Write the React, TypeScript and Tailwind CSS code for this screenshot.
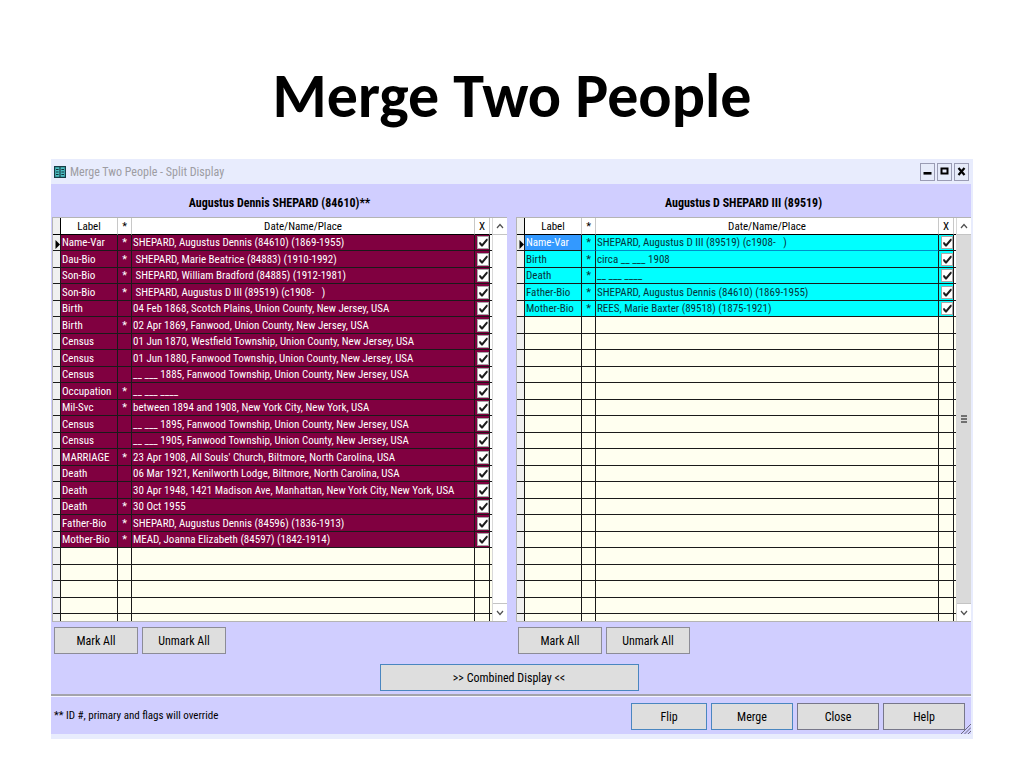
import clsx from "clsx";

type Row = {
    label: string;
    star: boolean;
    text: string;
};

const leftRows: Row[] = [
    {label: "Name-Var", star: true, text: "SHEPARD, Augustus Dennis (84610) (1869-1955)"},
    {label: "Dau-Bio", star: true, text: " SHEPARD, Marie Beatrice (84883) (1910-1992)"},
    {label: "Son-Bio", star: true, text: " SHEPARD, William Bradford (84885) (1912-1981)"},
    {label: "Son-Bio", star: true, text: " SHEPARD, Augustus D III (89519) (c1908-   )"},
    {label: "Birth", star: false, text: "04 Feb 1868, Scotch Plains, Union County, New Jersey, USA"},
    {label: "Birth", star: true, text: "02 Apr 1869, Fanwood, Union County, New Jersey, USA"},
    {label: "Census", star: false, text: "01 Jun 1870, Westfield Township, Union County, New Jersey, USA"},
    {label: "Census", star: false, text: "01 Jun 1880, Fanwood Township, Union County, New Jersey, USA"},
    {label: "Census", star: false, text: "__ ___ 1885, Fanwood Township, Union County, New Jersey, USA"},
    {label: "Occupation", star: true, text: "__ ___ ____"},
    {label: "Mil-Svc", star: true, text: "between 1894 and 1908, New York City, New York, USA"},
    {label: "Census", star: false, text: "__ ___ 1895, Fanwood Township, Union County, New Jersey, USA"},
    {label: "Census", star: false, text: "__ ___ 1905, Fanwood Township, Union County, New Jersey, USA"},
    {label: "MARRIAGE", star: true, text: "23 Apr 1908, All Souls' Church, Biltmore, North Carolina, USA"},
    {label: "Death", star: false, text: "06 Mar 1921, Kenilworth Lodge, Biltmore, North Carolina, USA"},
    {label: "Death", star: false, text: "30 Apr 1948, 1421 Madison Ave, Manhattan, New York City, New York, USA"},
    {label: "Death", star: true, text: "30 Oct 1955"},
    {label: "Father-Bio", star: true, text: "SHEPARD, Augustus Dennis (84596) (1836-1913)"},
    {label: "Mother-Bio", star: true, text: "MEAD, Joanna Elizabeth (84597) (1842-1914)"},
];

const rightRows: Row[] = [
    {label: "Name-Var", star: true, text: "SHEPARD, Augustus D III (89519) (c1908-   )"},
    {label: "Birth", star: true, text: "circa __ ___ 1908"},
    {label: "Death", star: true, text: "__ ___ ____"},
    {label: "Father-Bio", star: true, text: "SHEPARD, Augustus Dennis (84610) (1869-1955)"},
    {label: "Mother-Bio", star: true, text: "REES, Marie Baxter (89518) (1875-1921)"},
];

const VISIBLE_ROWS = 24;

const Check = ({name}: { name: string }) => (
    <label className="relative block h-[13px] w-3">
        <input type="checkbox" defaultChecked aria-label={name}
            className="peer block h-[13px] w-3 appearance-none border border-[#a8a8a8] bg-white"/>
        <svg viewBox="0 0 12 13"
            className="pointer-events-none absolute inset-0 hidden h-[13px] w-3 peer-checked:block">
            <path d="M2.2 6.2 L3.6 6.2 L5 8 L9.4 2.8 L10.6 2.8 L10.6 4.6 L5.6 10.6 L4.4 10.6 L2.2 8 Z" fill="#1c1c1c"/>
        </svg>
    </label>
);

const ScrollBar = ({full}: { full?: boolean }) => (
    <div className="flex w-[15px] shrink-0 flex-col border-l border-[#d8d8d8] bg-white">
        <button type="button" aria-label="Scroll up"
            className="flex h-[17px] shrink-0 items-center justify-center border-b border-[#c4c4c4] bg-white">
            <svg viewBox="0 0 8 6" className="h-[6px] w-2">
                <path d="M1 5 L4 1.5 L7 5" fill="none" stroke="#505050" strokeWidth="1.2"/>
            </svg>
        </button>
        <div className={clsx("flex flex-1 flex-col items-center justify-center gap-px", full ? "bg-[#dadada]" : "bg-white")}>
            {full && (
                <>
                    <div className="h-0.5 w-1.5 bg-[#707070]"/>
                    <div className="h-0.5 w-1.5 bg-[#707070]"/>
                    <div className="h-0.5 w-1.5 bg-[#707070]"/>
                </>
            )}
        </div>
        <button type="button" aria-label="Scroll down"
            className="flex h-[18px] shrink-0 items-center justify-center border-t border-[#c4c4c4] bg-white">
            <svg viewBox="0 0 8 6" className="h-[6px] w-2">
                <path d="M1 1 L4 4.5 L7 1" fill="none" stroke="#505050" strokeWidth="1.2"/>
            </svg>
        </button>
    </div>
);

type PaneProps = {
    title: string;
    rows: Row[];
    variant: "maroon" | "cyan";
};

const Pane = ({title, rows, variant}: PaneProps) => {
    const fill = variant === "maroon" ? "bg-[#800040] text-white" : "bg-[#00ffff] text-[#06333a]";
    const empty = Array.from({length: VISIBLE_ROWS - rows.length});
    const head = "border-b border-b-black border-r border-r-[#c8c8c8] bg-white p-0 text-center font-normal";
    const cell = "border-b border-r border-[#1a1a1a] p-0";

    return (
        <section className="min-w-0">
            <h2 className="pt-3 pb-1.5 text-center text-[12px] leading-[15px] font-bold">{title}</h2>
            <div className="flex h-[405px] overflow-hidden border-t border-b border-l border-[#b4b4b4] bg-[#fffff0]">
                <div className="min-w-0 flex-1">
                    <table className="w-full table-fixed border-separate border-spacing-0 leading-[15px]">
                        <colgroup>
                            <col className="w-2"/>
                            <col className="w-[57px]"/>
                            <col className="w-[14px]"/>
                            <col/>
                            <col className="w-[15px]"/>
                            <col className="w-[2px]"/>
                        </colgroup>
                        <thead>
                            <tr className="h-[17px]">
                                <td className="border-r border-b border-black bg-[#f0f0f0] p-0"/>
                                <th className={head}>Label</th>
                                <th className={head}>*</th>
                                <th className={head}>Date/Name/Place</th>
                                <th className={head}>X</th>
                                <td className="border-b border-black bg-white p-0"/>
                            </tr>
                        </thead>
                        <tbody>
                            {rows.map((row, i) => {
                                const active = variant === "cyan" && i === 0;
                                return (
                                    <tr key={i} className="odd:h-4 even:h-[17px]">
                                        <td className={clsx(cell, "bg-[#f0f0f0]")}>
                                            {i === 0 && (
                                                <svg viewBox="0 0 7 12" className="block h-3 w-[7px]">
                                                    <path d="M2.5 3 L7 7.5 L2.5 12 Z" fill="#000"/>
                                                </svg>
                                            )}
                                        </td>
                                        <td className={clsx(cell, "truncate pl-px", active ? "bg-[#3399ff] text-white" : fill)}>
                                            {row.label}
                                        </td>
                                        <td className={clsx(cell, "text-center", fill, active && "border-b-[#0090c8]")}>
                                            {row.star && "*"}
                                        </td>
                                        <td className={clsx(cell, "overflow-hidden pl-px whitespace-pre", fill, active && "border-b-[#0090c8]")}>
                                            {row.text}
                                        </td>
                                        <td className={clsx(cell, "pl-0.5", fill)}>
                                            <Check name={`Include ${row.label}`}/>
                                        </td>
                                        <td className="border-b border-[#1a1a1a] bg-white p-0"/>
                                    </tr>
                                );
                            })}
                            {empty.map((_, i) => (
                                <tr key={`empty-${i}`} className="odd:h-4 even:h-[17px]">
                                    <td className={clsx(cell, "bg-[#f0f0f0]")}/>
                                    <td className={cell}/>
                                    <td className={cell}/>
                                    <td className={cell}/>
                                    <td className={cell}/>
                                    <td className="border-b border-[#1a1a1a] p-0"/>
                                </tr>
                            ))}
                        </tbody>
                    </table>
                </div>
                <ScrollBar full={variant === "cyan"}/>
            </div>
            <div className="flex gap-1 pt-[5px] pl-0.5">
                <PushButton className="w-[84px] border-[#8c8c96]">Mark All</PushButton>
                <PushButton className="w-[84px] border-[#8c8c96]">Unmark All</PushButton>
            </div>
        </section>
    );
};

const PushButton = ({className, children}: { className: string; children: string }) => (
    <button type="button" className={clsx("h-[27px] border bg-[#dedede] text-center text-[12px]", className)}>
        {children}
    </button>
);

const caption = "flex h-[18px] w-[15px] items-center justify-center border border-[#9a9cb4] bg-[#e6ebfa]";

const TitleBar = () => (
    <header className="flex h-[25px] items-center bg-[#e8ecfd] pr-0.5 pl-[3px]">
        <svg viewBox="0 0 12 12" className="h-3 w-3">
            <rect width="12" height="12" fill="#163c46"/>
            <path d="M1.2 1.2h4.2v9.6h-4.2z M6.6 1.2h4.2v9.6h-4.2z" fill="#4cc0c4"/>
            <path d="M2 3.5h2.6M2 6h2.6M2 8.5h2.6M7.4 3.5h2.6M7.4 6h2.6M7.4 8.5h2.6" stroke="#12323c" strokeWidth="1"/>
        </svg>
        <h3 className="flex-1 pl-1 text-[12px] text-[#9d9da3]">Merge Two People - Split Display</h3>
        <div className="flex gap-0.5">
            <button type="button" aria-label="Minimize" className={caption}>
                <svg viewBox="0 0 9 9" className="h-[9px] w-[9px]"><path d="M0.5 5h8v2.6H0.5z" fill="#000"/></svg>
            </button>
            <button type="button" aria-label="Maximize" className={caption}>
                <svg viewBox="0 0 9 9" className="h-[9px] w-[9px]">
                    <path d="M1.5 1.5h6v5h-6z" fill="none" stroke="#000" strokeWidth="2"/>
                </svg>
            </button>
            <button type="button" aria-label="Close window" className={caption}>
                <svg viewBox="0 0 9 9" className="h-[9px] w-[9px]">
                    <path d="M1.5 1 L7.5 8 M7.5 1 L1.5 8" stroke="#000" strokeWidth="2.2"/>
                </svg>
            </button>
        </div>
    </header>
);

const App = () => {
    return (
        <main className="bg-white pt-[60px] pb-[29px] text-black">
            <h1 className="text-center font-[Carlito,Lato,sans-serif] text-[62px] leading-[72px] font-bold">Merge Two People</h1>
            <div className="mx-[51px] mt-[27px] border-r-2 border-b-5 border-[#e8ecfd] bg-[#d0ceff] font-['Roboto_Condensed','DejaVu_Sans_Condensed',sans-serif] text-[11px]">
                <TitleBar/>
                <div className="grid grid-cols-2 gap-[9px] pl-px">
                    <Pane title="Augustus Dennis SHEPARD (84610)**" rows={leftRows} variant="maroon"/>
                    <Pane title="Augustus D SHEPARD III (89519)" rows={rightRows} variant="cyan"/>
                </div>
                <div className="flex justify-center pt-2.5 pr-1 pb-[3px]">
                    <PushButton className="w-[259px] border-[#4a86c0]">{">> Combined Display <<"}</PushButton>
                </div>
                <footer className="relative border-t-2 border-[#a3a3ab]">
                    <div className="flex items-center border-t border-[#f4f4ff] pt-1.5 pr-1.5 pb-1">
                        <p className="flex-1 pl-[3px]">** ID #, primary and flags will override</p>
                        <div className="flex gap-1">
                            <PushButton className="w-[76px] border-[#4a86c0]">Flip</PushButton>
                            <PushButton className="w-[82px] border-[#4a86c0]">Merge</PushButton>
                            <PushButton className="w-[82px] border-[#77778a]">Close</PushButton>
                            <PushButton className="w-[82px] border-[#77778a]">Help</PushButton>
                        </div>
                    </div>
                    <svg viewBox="0 0 10 10" className="absolute right-0 bottom-0 h-2.5 w-2.5">
                        <path d="M0 10 L10 0 M3.5 10 L10 3.5 M7 10 L10 7" stroke="#6c6c80" strokeWidth="1"/>
                    </svg>
                </footer>
            </div>
        </main>
    );
};

export default App;
